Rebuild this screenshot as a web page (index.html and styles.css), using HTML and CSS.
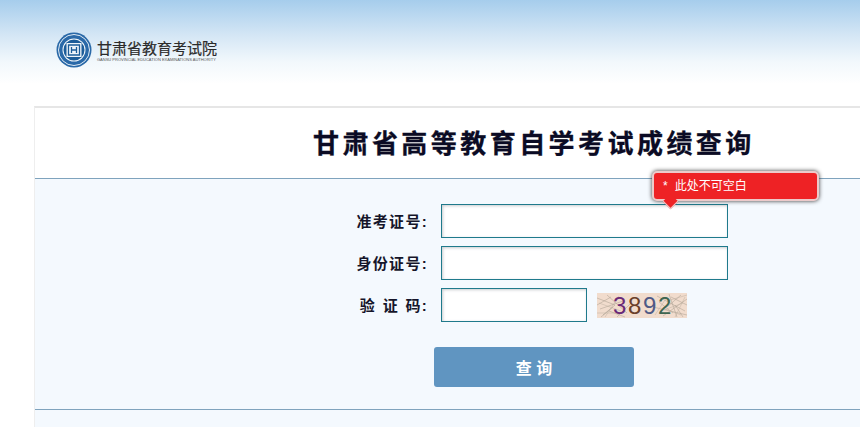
FILE: index.html
```html
<!DOCTYPE html>
<html lang="zh-CN">
<head>
  <meta charset="UTF-8">
  <title>甘肃省高等教育自学考试成绩查询</title>
  <link rel="stylesheet" href="styles.css">
</head>
<body>

  <!-- 页头 -->
  <header class="top">
    <svg class="logo-mark" width="36" height="36" viewBox="0 0 36 36">
      <circle cx="18" cy="18" r="17.5" fill="#2a69a8"/>
      <circle cx="18" cy="18" r="15.500" fill="none" stroke="#dfeaf4" stroke-width="1"/>
      <circle cx="18" cy="18" r="11.500" fill="#f4f8fb"/>
      <circle cx="18" cy="18" r="10.500" fill="#1c5c99"/>
      <rect x="10.500" y="11" width="15" height="14" fill="#eef4f9"/>
      <path d="M12.500 13h11v10h-11zM15.500 15v6M20.500 15v6M15.500 18h5" fill="none" stroke="#1c5c99" stroke-width="1.300"/>
    </svg>
    <div class="logo-text">
      <div class="logo-cn">甘肃省教育考试院</div>
      <div class="logo-en">GANSU PROVINCIAL EDUCATION EXAMINATIONS AUTHORITY</div>
    </div>
  </header>

  <!-- 查询面板 -->
  <main class="panel">
    <h1 class="title">甘肃省高等教育自学考试成绩查询</h1>

    <form class="query-form">
      <div class="tip"><span class="tip-star">*</span>此处不可空白</div>

      <div class="row">
        <label class="row-label">准考证号:</label>
        <input class="field" type="text">
      </div>
      <div class="row">
        <label class="row-label">身份证号:</label>
        <input class="field" type="text">
      </div>
      <div class="row">
        <label class="row-label row-label-wide">验 证 码:</label>
        <input class="field field-short" type="text">
        <div class="captcha">
          <svg class="captcha-noise" width="90" height="25" viewBox="0 0 90 25">
            <path d="M0 5L18 12L6 22M10 2L30 20M3 16L26 8M20 24L34 10M60 3L88 18M66 23L90 6M72 1L80 24M56 14L90 22M62 9L76 20M84 2L70 14M0 12L14 4M4 24L16 14M12 18L28 24M74 4L90 12M78 12L86 24" fill="none" stroke="#a89c8e" stroke-width=".5"/>
            <path d="M2 10L24 18M8 24L22 3M64 18L86 10M78 24L88 4M58 22L70 4M0 20L20 20M70 8L90 2M68 16L84 22" fill="none" stroke="#bfb0a0" stroke-width=".5"/>
          </svg>
          <span class="cap-digit cap-a">3</span>
          <span class="cap-digit cap-b">8</span>
          <span class="cap-digit cap-c">9</span>
          <span class="cap-digit cap-d">2</span>
        </div>
      </div>

      <button class="submit" type="button">查 询</button>
    </form>
  </main>

</body>
</html>
```

FILE: styles.css
```css
/* 基本设置 */
html, body {
  margin: 0;
  padding: 0;
  height: 100%;
  overflow: hidden;
}

body {
  background-color: #fff;
  font-family: "Liberation Sans", "Noto Sans CJK SC", sans-serif;
  color: #000;
}

/* 页头 */
.top {
  height: 106px;
  box-sizing: border-box;
  padding: 32px 0 0 56px;
  display: flex;
  align-items: flex-start;
  gap: 5px;
  background: linear-gradient(to bottom, #a6cdec 0, #d4e6f5 35px, #f2f8fc 62px, #fff 84px);
}

.logo-mark {
  flex: none;
}

.logo-text {
  padding-top: 8px;
}

.logo-cn {
  font-size: 15px;
  line-height: 17px;
  color: #2b2b2b;
  -webkit-text-stroke: .2px #2b2b2b;
}

.logo-en {
  font-size: 4px;
  line-height: 6px;
  color: #555;
  white-space: nowrap;
}

/* 查询面板 */
.panel {
  margin-left: 34px;
  border-left: 1px solid #eeeeee;
  border-top: 2px solid #e6e6e6;
  height: 319px;
  background-color: #f4f9fe;
}

.title {
  margin: 0;
  height: 71px;
  line-height: 72px;
  box-sizing: border-box;
  padding-left: 278px;
  font-size: 26px;
  font-weight: bold;
  letter-spacing: 3.450px;
  color: #0b0b24;
  -webkit-text-stroke: .3px #0b0b24;
  background-color: #fff;
  border-bottom: 1px solid #7fa3bd;
  white-space: nowrap;
}

.query-form {
  position: relative;
  height: 231px;
  box-sizing: border-box;
  padding-top: 25px;
  border-bottom: 1px solid #7fa3bd;
}

.row {
  display: flex;
  align-items: center;
  gap: 13px;
  margin-bottom: 8px;
}

.row-label {
  width: 393px;
  padding-bottom: 2px;
  text-align: right;
  font-size: 15px;
  font-weight: bold;
  letter-spacing: 1.300px;
  color: #15152a;
}

.row-label-wide {
  word-spacing: 1px;
}

.field {
  width: 287px;
  height: 34px;
  box-sizing: border-box;
  margin: 0;
  padding: 0 6px;
  border: 1px solid #1f7a8c;
  background-color: #fff;
  box-shadow: inset 1px 1px 3px #c8ccd0;
  outline: none;
}

.field-short {
  width: 146px;
}

/* 验证码 */
.captcha {
  position: relative;
  display: flex;
  flex: none;
  box-sizing: border-box;
  width: 90px;
  height: 25px;
  margin-left: -3px;
  padding-left: 16px;
  background-color: #f1dccd;
}

.captcha-noise {
  position: absolute;
  left: 0;
  top: 0;
}

.cap-digit {
  position: relative;
  width: 15px;
  font-size: 24px;
  line-height: 25px;
}

.cap-a { color: #6a2a78; }
.cap-b { color: #6b3f2a; }
.cap-c { color: #4f5a86; }
.cap-d { color: #3f6650; }

.submit {
  display: block;
  width: 200px;
  height: 40px;
  margin: 25px 0 0 399px;
  padding: 0;
  border: none;
  border-radius: 3px;
  background-color: #6095c1;
  color: #fff;
  font-family: inherit;
  font-size: 16px;
  font-weight: bold;
}

/* 提示气泡 */
.tip {
  position: absolute;
  left: 617px;
  top: -8px;
  width: 167px;
  height: 30px;
  box-sizing: border-box;
  padding-left: 9px;
  border: 2px solid #eccaca;
  border-radius: 5px;
  background-color: #ee2225;
  box-shadow: 0 0 4px #333;
  color: #fff;
  font-size: 12px;
  line-height: 27px;
  z-index: 5;
}

.tip::after {
  content: "";
  position: absolute;
  left: 11px;
  bottom: -8px;
  width: 10px;
  height: 10px;
  background-color: #ee2225;
  border-right: 1px solid #eccaca;
  border-bottom: 1px solid #eccaca;
  transform: rotate(45deg);
}

.tip-star {
  margin-right: 7px;
}
```
